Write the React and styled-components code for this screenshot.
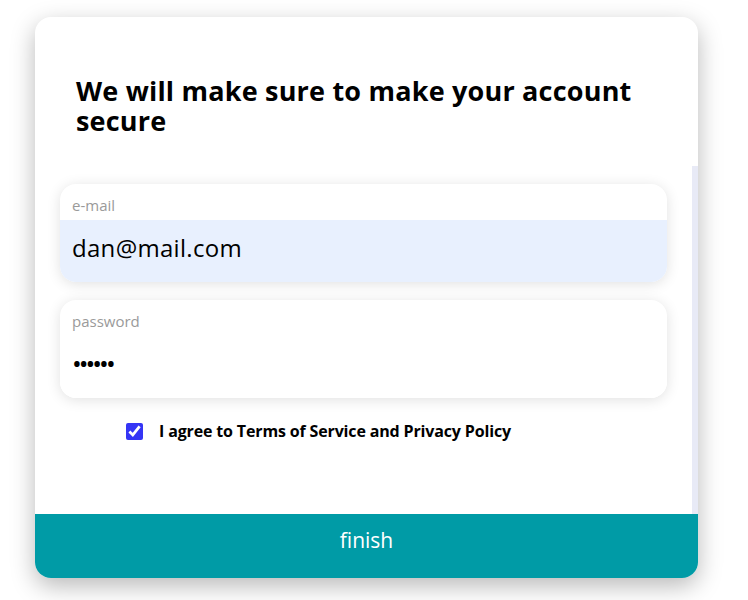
import React, { useState } from "react";
import styled, { createGlobalStyle } from "styled-components";

const GlobalStyle = createGlobalStyle`
  * { box-sizing: border-box; }
  body {
    margin: 0;
    background: #ffffff;
    font-family: "Open Sans", "Noto Sans", sans-serif;
  }
`;

const Page = styled.div`
  width: 748px;
  height: 600px;
  padding: 17px 0 0 35px;
`;

const Card = styled.div`
  width: 663px;
  height: 561px;
  background: #fff;
  border-radius: 16px;
  overflow: hidden;
  display: flex;
  flex-direction: column;
  box-shadow: 0 8px 24px rgba(0, 0, 0, 0.28);
`;

const Heading = styled.h1`
  margin: 0;
  padding: 59px 30px 0 41px;
  height: 149px;
  font-family: "Open Sans", sans-serif;
  font-weight: 700;
  font-size: 27px;
  line-height: 30px;
  color: #000;
  letter-spacing: 0.2px;
`;

const Body = styled.div`
  flex: 1;
  display: flex;
  min-height: 0;
`;

const Scroll = styled.div`
  flex: 1;
  overflow: hidden;
  padding: 18px 25px 0 25px;
  display: flex;
  flex-direction: column;
  gap: 18px;
`;

const Track = styled.div`
  width: 6px;
  background: #e8eaf6;
`;

const Field = styled.label`
  display: flex;
  flex-direction: column;
  height: 98px;
  border-radius: 16px;
  overflow: hidden;
  background: #fff;
  box-shadow: 0 2px 14px rgba(0, 0, 0, 0.12);
  flex-shrink: 0;
`;

const Label = styled.span`
  height: 36px;
  padding: 11px 12px 0;
  font-size: 15px;
  color: #9a9a9a;
`;

const Input = styled.input`
  flex: 1;
  border: none;
  outline: none;
  padding: 0 12px 8px;
  font-family: "Open Sans", sans-serif;
  font-size: ${(p) => (p.type === "password" ? "26px" : "24px")};
  color: #000;
  background: ${(p) => (p.$filled ? "#e8f0fe" : "#fff")};
  letter-spacing: ${(p) => (p.type === "password" ? "-3px" : "0.3px")};
`;

const Agree = styled.label`
  display: flex;
  align-items: center;
  gap: 16px;
  margin: 4px 0 0 66px;
  font-family: "Open Sans", sans-serif;
  font-weight: 700;
  font-size: 16px;
  letter-spacing: -0.15px;
  color: #000;
`;

const Check = styled.input`
  width: 17px;
  height: 17px;
  margin: 0;
  accent-color: #3535f5;
`;

const Finish = styled.button`
  height: 64px;
  flex-shrink: 0;
  border: none;
  background: #009ba6;
  color: #fff;
  font-family: "Open Sans", sans-serif;
  font-size: 21px;
  padding-bottom: 14px;
  cursor: pointer;
`;

export default function App() {
  const [email, setEmail] = useState("dan@mail.com");
  const [password, setPassword] = useState("123456");
  const [agree, setAgree] = useState(true);

  return (
    <>
      <GlobalStyle />
      <Page>
        <Card>
          <Heading>We will make sure to make your account secure</Heading>
          <Body>
            <Scroll>
              <Field>
                <Label>e-mail</Label>
                <Input $filled value={email} onChange={(e) => setEmail(e.target.value)} />
              </Field>
              <Field>
                <Label>password</Label>
                <Input type="password" value={password} onChange={(e) => setPassword(e.target.value)} />
              </Field>
              <Agree>
                <Check type="checkbox" checked={agree} onChange={() => setAgree(!agree)} />
                I agree to Terms of Service and Privacy Policy
              </Agree>
            </Scroll>
            <Track />
          </Body>
          <Finish>finish</Finish>
        </Card>
      </Page>
    </>
  );
}
